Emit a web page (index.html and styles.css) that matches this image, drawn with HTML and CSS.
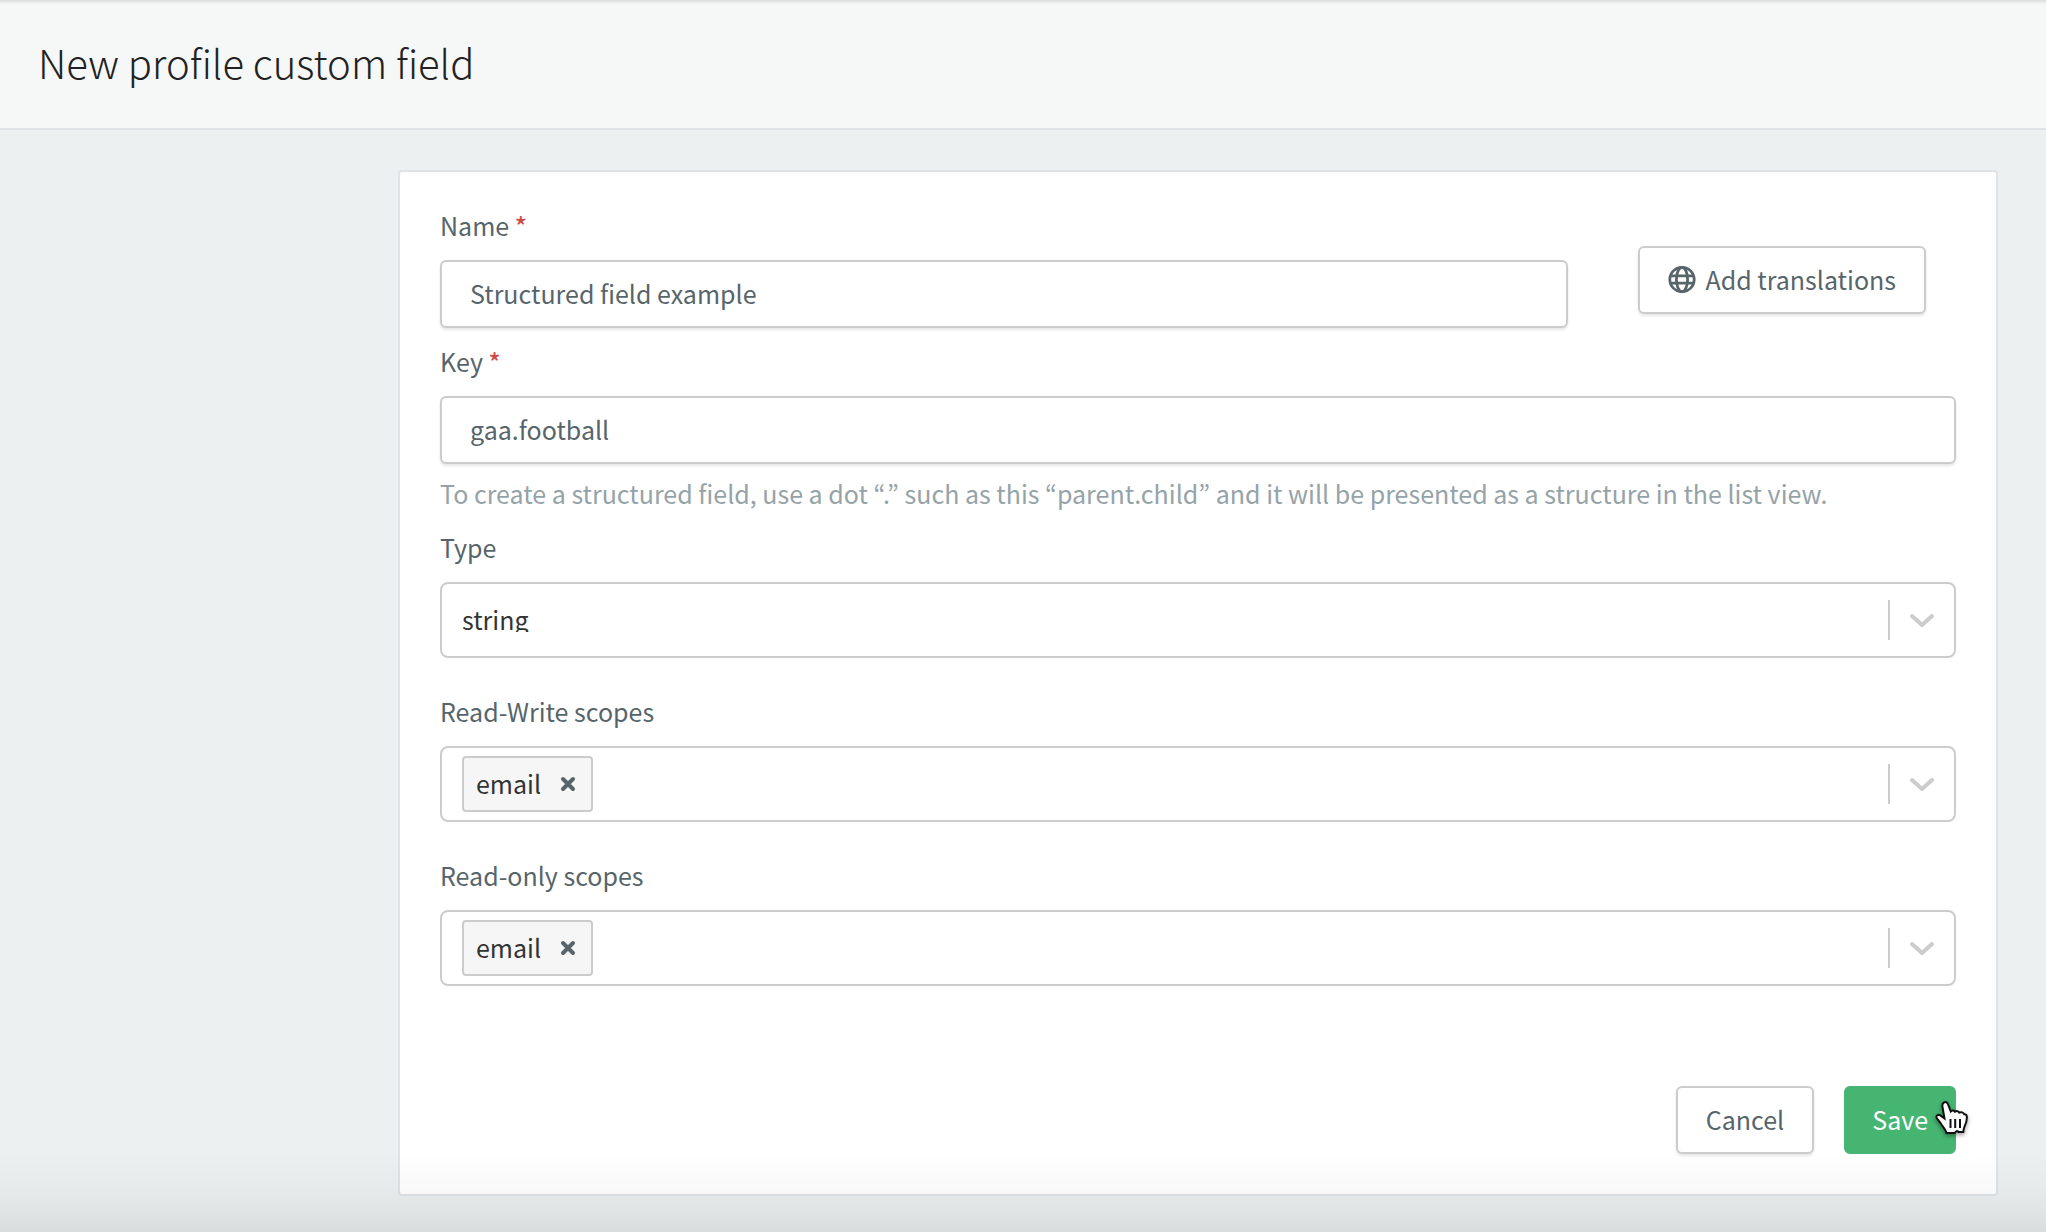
FILE: index.html
```html
<!DOCTYPE html>
<html lang="en">
<head>
  <meta charset="UTF-8">
  <title>New profile custom field</title>
  <link rel="stylesheet" href="styles.css">
</head>
<body>
  <header class="page-header">
    <h1>New profile custom field</h1>
  </header>

  <main class="page">
    <form class="card">
      <div class="name-row">
        <div class="field name-field">
          <label for="name">Name <span class="required">*</span></label>
          <input class="text-input" id="name" type="text" value="Structured field example">
        </div>
        <button type="button" class="btn translate-btn">
          <svg class="globe" viewBox="0 0 28 28" fill="none" stroke="currentColor" stroke-width="2.8">
            <circle cx="14" cy="14.500" r="12.2"/>
            <ellipse cx="14" cy="14.500" rx="5.6" ry="12.2"/>
            <path d="M3 10.8H25M3 18.2H25"/>
          </svg>
          Add translations
        </button>
      </div>

      <div class="field key-field">
        <label for="key">Key <span class="required">*</span></label>
        <input class="text-input" id="key" type="text" value="gaa.football">
        <p class="hint">To create a structured field, use a dot “.” such as this “parent.child” and it will be presented as a structure in the list view.</p>
      </div>

      <div class="field type-field">
        <label for="type">Type</label>
        <div class="select">
          <select id="type">
            <option>string</option>
          </select>
          <span class="divider"></span>
          <svg class="chevron" viewBox="0 0 28 18"><path d="M4 5L14 14L24 5"/></svg>
        </div>
      </div>

      <div class="field scope-field">
        <label for="rw-scopes">Read-Write scopes</label>
        <div class="select">
          <span class="tag">email
            <button type="button" class="tag-remove" aria-label="Remove email"><svg viewBox="0 0 14 14"><path d="M2 3L12 13M12 3L2 13"/></svg></button>
          </span>
          <input class="select-search" id="rw-scopes" type="text">
          <span class="divider"></span>
          <svg class="chevron" viewBox="0 0 28 18"><path d="M4 5L14 14L24 5"/></svg>
        </div>
      </div>

      <div class="field scope-field">
        <label for="ro-scopes">Read-only scopes</label>
        <div class="select">
          <span class="tag">email
            <button type="button" class="tag-remove" aria-label="Remove email"><svg viewBox="0 0 14 14"><path d="M2 3L12 13M12 3L2 13"/></svg></button>
          </span>
          <input class="select-search" id="ro-scopes" type="text">
          <span class="divider"></span>
          <svg class="chevron" viewBox="0 0 28 18"><path d="M4 5L14 14L24 5"/></svg>
        </div>
      </div>

      <div class="actions">
        <button type="button" class="btn">Cancel</button>
        <button type="submit" class="btn btn-primary">Save
          <svg class="pointer" viewBox="0 0 34 38">
            <path d="M9 2.5C10.5 1.5 12.3 2.3 12.9 4L15.8 11.5C17 10 19.2 10.2 20 11.8C21.5 10.6 23.5 11 24.3 12.6C26 11.7 28.5 12.3 29.2 14.2C30.6 14 31.8 15 31.9 17C32 21 31 23.5 29.5 26.5C28.7 28.5 28.5 30 28.3 32L24.5 32C23 32 22.7 31 22 31C21 31 20.5 33 19 33L11.5 33C11 30 8.5 27.5 6.5 24.5C5 22 2 19 1.5 17.5C1 15.5 3 14.3 5 15.2L9.5 18.5L7.5 7C7.1 5 7.5 3.3 9 2.5Z" fill="#fff" stroke="#111" stroke-width="2"/>
            <path d="M15.5 19V28M20.2 19V28M25 19V28" stroke="#111" stroke-width="2"/>
          </svg>
        </button>
      </div>
    </form>
  </main>
</body>
</html>
```
FILE: styles.css
```css
* {
  box-sizing: border-box;
}
body {
  margin: 0;
  min-height: 100vh;
  background: #ecf0f1;
  color: #57656b;
  font-family: "Noto Sans CJK KR", "Noto Sans", sans-serif;
  font-size: 25px;
  line-height: 26px;
}
/* soft shade along the bottom of the window */
body::after {
  content: "";
  position: fixed;
  left: 0;
  right: 0;
  bottom: 0;
  height: 80px;
  background: linear-gradient(rgba(90, 90, 90, 0), rgba(90, 90, 90, 0.04) 50%, rgba(90, 90, 90, 0.12));
  pointer-events: none;
}
input, select, button {
  font: inherit;
  color: inherit;
}
.page-header {
  height: 130px;
  padding: 33px 38px;
  background: #f6f8f7;
  border-bottom: 2px solid #dde3e6;
  box-shadow: inset 0 4px 3px -2px #d8dbdb;
}
h1 {
  margin: 0;
  color: #222;
  font-size: 40px;
  font-weight: 300;
  line-height: 58px;
}
.page {
  padding: 40px 48px 36px 398px;
}
.card {
  padding: 40px;
  background: #fff;
  border: 2px solid #dde3e6;
  border-radius: 4px;
}
.field {
  display: flex;
  flex-direction: column;
}
.field label {
  margin-bottom: 22px;
}
.required {
  color: #d04a48;
  font-weight: 500;
}
.name-row {
  display: flex;
  align-items: flex-end;
  gap: 70px;
  padding-right: 30px;
}
.name-field {
  flex: 1;
}
.text-input {
  width: 100%;
  height: 68px;
  padding: 0 28px 2px;
  background: #fff;
  border: 2px solid #ccc;
  border-radius: 6px;
  box-shadow: 0 2px 3px rgba(0, 0, 0, 0.1);
}
.key-field {
  margin-top: 20px;
}
.hint {
  margin: 16px 0 0;
  color: #95a3a8;
}
.type-field {
  margin-top: 28px;
}
.scope-field {
  margin-top: 40px;
}
.select {
  display: flex;
  align-items: center;
  height: 76px;
  padding: 0 18px 0 20px;
  background: #fff;
  border: 2px solid #ccc;
  border-radius: 8px;
  color: #333;
}
.select select {
  flex: 1;
  height: 32px;
  padding: 0 0 2px;
  background: none;
  border: 0;
  appearance: none;
}
.select-search {
  flex: 1;
  background: none;
  border: 0;
}
.divider {
  width: 2px;
  height: 40px;
  margin-right: 18px;
  background: #ccc;
}
.chevron {
  width: 28px;
  height: 18px;
  fill: none;
  stroke: #ccc;
  stroke-width: 4;
  stroke-linecap: round;
  stroke-linejoin: round;
}
.tag {
  display: flex;
  align-items: center;
  gap: 20px;
  height: 56px;
  padding: 0 16px 2px 12px;
  background: #f6f6f6;
  border: 2px solid #ccc;
  border-radius: 4px;
}
.tag-remove {
  display: flex;
  padding: 0;
  background: none;
  border: 0;
  color: #57656b;
}
.tag-remove svg {
  width: 14px;
  height: 14px;
  overflow: visible;
  stroke: currentColor;
  stroke-width: 4;
  stroke-linecap: round;
}
.actions {
  display: flex;
  justify-content: flex-end;
  gap: 30px;
  margin-top: 100px;
}
.btn {
  position: relative;
  display: flex;
  align-items: center;
  gap: 10px;
  height: 68px;
  padding: 0 28px 2px;
  background: #fff;
  border: 2px solid #ccc;
  border-radius: 6px;
  box-shadow: 0 2px 3px rgba(0, 0, 0, 0.1);
}
.translate-btn {
  margin-bottom: 14px;
}
.globe {
  width: 28px;
  height: 28px;
}
.btn-primary {
  padding: 0 26px 2px;
  background: #45b571;
  border-color: #45b571;
  box-shadow: none;
  color: #fff;
}
.pointer {
  position: absolute;
  right: -15px;
  top: 12px;
  width: 34px;
  height: 38px;
  fill: none;
  filter: drop-shadow(0 2px 2px rgba(0, 0, 0, 0.4));
}
```
